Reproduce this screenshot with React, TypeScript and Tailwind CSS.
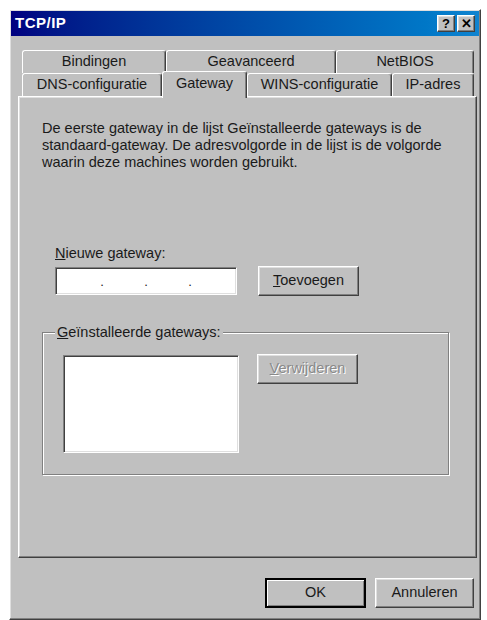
import React from 'react';

const raised =
  'border border-t-white border-l-white border-r-[#404040] border-b-[#404040] shadow-[inset_-1px_-1px_#808080,inset_1px_1px_#dfdfdf]';
const sunken =
  'border border-t-[#808080] border-l-[#808080] border-r-white border-b-white shadow-[inset_1px_1px_#404040,inset_-1px_-1px_#dfdfdf]';

const Tab: React.FC<{ label: string; width: string; selected?: boolean }> = ({ label, width, selected }) => (
  <div
    className={`${width} flex items-center justify-center rounded-t-[3px] border-t border-l border-r border-t-white border-l-white border-r-[#404040] bg-[#c0c0c0] shadow-[inset_-1px_0_#808080] ${
      selected ? 'relative z-10 -mb-[2px] h-[27px] pb-[2px]' : 'h-[23px]'
    }`}
  >
    {label}
  </div>
);

const Button: React.FC<{ children: React.ReactNode; width: string; disabled?: boolean; isDefault?: boolean }> = ({
  children,
  width,
  disabled,
  isDefault,
}) => (
  <button
    className={`${width} h-[30px] bg-[#c0c0c0] text-[14.5px] ${
      isDefault
        ? 'border-2 border-black shadow-[inset_1px_1px_white,inset_-1px_-1px_#808080]'
        : raised
    } ${disabled ? 'text-[#8a8a8a] [text-shadow:1px_1px_0_#fff]' : 'text-[#1a1a1a]'}`}
  >
    {children}
  </button>
);

export default function App() {
  return (
    <div className="min-h-[620px] bg-white pt-[9px] pl-[9px] font-['Liberation_Sans',Arial,sans-serif] text-[14.5px] text-[#1a1a1a]">
      <div className={`w-[472px] bg-[#c0c0c0] p-px ${raised}`}>
        {/* title bar */}
        <div className="flex h-[25px] items-center justify-between bg-linear-to-r from-[#000080] to-[#1084d0] pl-[4px] pr-[4px]">
          <span className="text-[15px] font-bold tracking-[0.5px] text-white">TCP/IP</span>
          <div className="flex gap-[2px]">
            <div className={`flex h-[17px] w-[18px] items-center justify-center bg-[#c0c0c0] text-[13px] font-bold leading-none text-black ${raised}`}>
              ?
            </div>
            <div className={`flex h-[17px] w-[18px] items-center justify-center bg-[#c0c0c0] text-[13px] font-bold leading-none text-black ${raised}`}>
              ✕
            </div>
          </div>
        </div>

        {/* tabs */}
        <div className="mt-[14px] ml-[11px] flex w-[452px]">
          <Tab label="Bindingen" width="w-[144px]" />
          <Tab label="Geavanceerd" width="w-[170px]" />
          <Tab label="NetBIOS" width="w-[138px]" />
        </div>
        <div className="ml-[11px] flex h-[23px] w-[452px] items-end">
          <Tab label="DNS-configuratie" width="w-[140px]" />
          <Tab label="Gateway" width="w-[85px]" selected />
          <Tab label="WINS-configuratie" width="w-[145px]" />
          <Tab label="IP-adres" width="w-[82px]" />
        </div>

        {/* panel */}
        <div className={`ml-[7px] h-[462px] w-[459px] bg-[#c0c0c0] ${raised}`}>
          <p className="pt-[23px] pl-[23px] leading-[17px]">
            De eerste gateway in de lijst Geïnstalleerde gateways is de
            <br />
            standaard-gateway. De adresvolgorde in de lijst is de volgorde
            <br />
            waarin deze machines worden gebruikt.
          </p>

          <div className="mt-[74px] pl-[36px]">
            <div className="leading-[17px]">
              <span className="underline">N</span>ieuwe gateway:
            </div>
            <div className="mt-[5px] flex items-start gap-[21px]">
              <div className={`flex h-[28px] w-[182px] items-end justify-around bg-white px-[24px] pb-[6px] text-[13px] leading-none ${sunken}`}>
                <span>.</span>
                <span>.</span>
                <span>.</span>
              </div>
              <div className="-mt-px">
                <Button width="w-[101px]">
                  <span className="underline">T</span>oevoegen
                </Button>
              </div>
            </div>
          </div>

          <fieldset className="mt-[28px] ml-[23px] w-[407px] border border-[#808080] shadow-[inset_1px_1px_white,1px_1px_white] pb-[21px]">
            <legend className="ml-[12px] bg-[#c0c0c0] px-[2px] leading-[17px]">
              <span className="underline">G</span>eïnstalleerde gateways:
            </legend>
            <div className="flex items-start gap-[18px] pt-[14px] pl-[20px]">
              <div className={`h-[98px] w-[176px] bg-white ${sunken}`} />
              <div className="-mt-px">
                <Button width="w-[101px]" disabled>
                  <span className="underline">V</span>erwijderen
                </Button>
              </div>
            </div>
          </fieldset>
        </div>

        {/* bottom buttons */}
        <div className="mt-[20px] mb-[10px] flex justify-end gap-[9px] pr-[5px]">
          <Button width="w-[101px]" isDefault>
            OK
          </Button>
          <Button width="w-[99px]">Annuleren</Button>
        </div>
      </div>
    </div>
  );
}
